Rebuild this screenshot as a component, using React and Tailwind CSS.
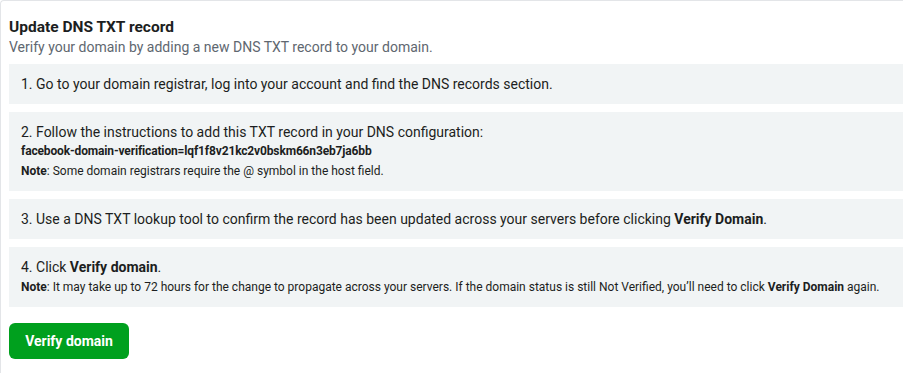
import React from 'react';

const Step = ({ children }) => (
  <div className="bg-[#f1f4f5] py-3 pl-3 pr-4">{children}</div>
);

const App = () => {
  return (
    <div className="h-[373px] w-[903px] overflow-hidden bg-white font-['Roboto',sans-serif] text-[#1c1e21]">
      <div className="h-full rounded-tl-[4px] border-l border-t border-[#e3e5e8] pl-2 pr-0 pt-4">
        <h2 className="text-[15.5px] font-bold leading-[20px]">Update DNS TXT record</h2>
        <p className="text-[14px] leading-[20px] text-[#606770]">
          Verify your domain by adding a new DNS TXT record to your domain.
        </p>

        <div className="mt-[7px] flex flex-col gap-2">
          <Step>
            <div className="text-[14px] leading-4">
              1. Go to your domain registrar, log into your account and find the DNS records section.
            </div>
          </Step>

          <Step>
            <div className="text-[14px] leading-4">
              2. Follow the instructions to add this TXT record in your DNS configuration:
            </div>
            <div className="mt-[3px] text-[12px] font-bold leading-4 tracking-[-0.15px]">
              facebook-domain-verification=lqf1f8v21kc2v0bskm66n3eb7ja6bb
            </div>
            <div className="mt-1 text-[12px] leading-4">
              <span className="font-bold">Note</span>: Some domain registrars require the @ symbol in the host field.
            </div>
          </Step>

          <Step>
            <div className="text-[14px] leading-4">
              3. Use a DNS TXT lookup tool to confirm the record has been updated across your servers before clicking{' '}
              <span className="font-bold">Verify Domain</span>.
            </div>
          </Step>

          <Step>
            <div className="text-[14px] leading-4">
              4. Click <span className="font-bold">Verify domain</span>.
            </div>
            <div className="mt-1 text-[12px] leading-4">
              <span className="font-bold">Note</span>: It may take up to 72 hours for the change to propagate across your servers. If the domain status is still Not Verified, you’ll need to click{' '}
              <span className="font-bold">Verify Domain</span> again.
            </div>
          </Step>
        </div>

        <button className="mt-4 h-9 w-[120px] rounded-md bg-[#00a01e] text-[14px] font-bold text-white">
          Verify domain
        </button>
      </div>
    </div>
  );
};

export default App;
